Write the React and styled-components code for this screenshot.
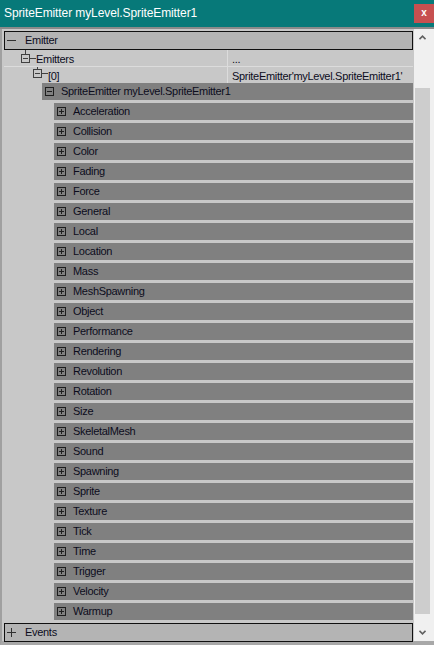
import React from 'react'
import styled, { createGlobalStyle } from 'styled-components'

const GlobalStyle = createGlobalStyle`
  html, body {
    margin: 0;
    padding: 0;
    background: #c8c8c8;
  }
  body {
    font-family: "Liberation Sans", Arial, sans-serif;
  }
`

const groups = [
  'Acceleration', 'Collision', 'Color', 'Fading', 'Force', 'General', 'Local',
  'Location', 'Mass', 'MeshSpawning', 'Object', 'Performance', 'Rendering',
  'Revolution', 'Rotation', 'Size', 'SkeletalMesh', 'Sound', 'Spawning',
  'Sprite', 'Texture', 'Tick', 'Time', 'Trigger', 'Velocity', 'Warmup',
]

// little [+] / [-] box used by the tree
function Expander({ open, color = '#3a3a3a' }) {
  return (
    <svg width="9" height="9" viewBox="0 0 9 9" style={{ display: 'block', flexShrink: 0 }}>
      <rect x="0.5" y="0.5" width="8" height="8" fill="none" stroke={color} />
      <line x1="2" y1="4.5" x2="7" y2="4.5" stroke={color} />
      {!open && <line x1="4.5" y1="2" x2="4.5" y2="7" stroke={color} />}
    </svg>
  )
}

// bare +/- drawn in front of a category header
function CategorySign({ open }) {
  const c = '#303030'
  return (
    <svg width="9" height="9" viewBox="0 0 9 9" style={{ display: 'block', flexShrink: 0 }}>
      <line x1="0" y1="4.5" x2="9" y2="4.5" stroke={c} />
      {!open && <line x1="4.5" y1="0" x2="4.5" y2="9" stroke={c} />}
    </svg>
  )
}

// tree connector: stem from the parent, box, then a branch to the label
function TreeGlyph({ boxTop, stem }) {
  const c = '#404040'
  return (
    <svg width="17" height="16" viewBox="0 0 17 16" style={{ display: 'block', flexShrink: 0 }}>
      {stem && <line x1="5.5" y1="0" x2="5.5" y2={boxTop} stroke={c} />}
      <rect x="1.5" y={boxTop + 0.5} width="8" height="8" fill="none" stroke={c} />
      <line x1="3" y1={boxTop + 4.5} x2="8" y2={boxTop + 4.5} stroke={c} />
      <line x1="9.5" y1={boxTop + 4.5} x2="16" y2={boxTop + 4.5} stroke={c} />
    </svg>
  )
}

function Chevron({ down }) {
  return (
    <svg width="7" height="5" viewBox="0 0 7 5" style={{ display: 'block' }}>
      <polyline
        points={down ? '0.5,0.8 3.5,3.8 6.5,0.8' : '0.5,4.2 3.5,1.2 6.5,4.2'}
        fill="none"
        stroke="#606060"
        strokeWidth="1.6"
      />
    </svg>
  )
}

export default function App() {
  return (
    <>
      <GlobalStyle />
      <Window>
        <TitleBar>
          <Title>SpriteEmitter myLevel.SpriteEmitter1</Title>
          <CloseButton>x</CloseButton>
        </TitleBar>
        <Body>
          <Tree>
            <Category>
              <CategorySign open />
              <Label>Emitter</Label>
            </Category>

            <PropRow>
              <NameCell indent={16}>
                <TreeGlyph boxTop={4} stem />
                <Label>Emitters</Label>
              </NameCell>
              <ValueCell>...</ValueCell>
            </PropRow>
            <PropRow last>
              <NameCell indent={28}>
                <TreeGlyph boxTop={2} stem />
                <Label>[0]</Label>
              </NameCell>
              <ValueCell>SpriteEmitter'myLevel.SpriteEmitter1'</ValueCell>
            </PropRow>

            <ObjectRow>
              <Expander open color="#1e1e1e" />
              <Label>SpriteEmitter myLevel.SpriteEmitter1</Label>
            </ObjectRow>

            <GroupList>
              {groups.map(name => (
                <GroupRow key={name}>
                  <Expander color="#1e1e1e" />
                  <Label>{name}</Label>
                </GroupRow>
              ))}
            </GroupList>

            <Category events>
              <CategorySign />
              <Label>Events</Label>
            </Category>
          </Tree>

          <ScrollBar>
            <ScrollArrow><Chevron /></ScrollArrow>
            <ScrollTrack>
              <Thumb />
            </ScrollTrack>
            <ScrollArrow><Chevron down /></ScrollArrow>
          </ScrollBar>
        </Body>
      </Window>
    </>
  )
}

const Window = styled.div`
  width: 434px;
  height: 645px;
  box-sizing: border-box;
  display: flex;
  flex-direction: column;
  background: #c8c8c8;
  overflow: hidden;
`

const TitleBar = styled.div`
  height: 27px;
  flex-shrink: 0;
  display: flex;
  align-items: flex-start;
  background: #077979;
  border-bottom: 2px solid #8a8a8a;
`

const Title = styled.div`
  flex: 1;
  padding: 6px 0 0 4px;
  color: #ffffff;
  font-size: 12px;
  letter-spacing: -0.1px;
  line-height: 14px;
  white-space: nowrap;
`

const CloseButton = styled.div`
  width: 20px;
  height: 19px;
  margin-top: 4px;
  background: #c75050;
  color: #ffffff;
  font-size: 10px;
  font-weight: bold;
  line-height: 18px;
  text-align: center;
`

const Body = styled.div`
  flex: 1;
  display: flex;
  border-left: 2px solid #a0a0a0;
  border-bottom: 4px solid #a8a8a8;
  min-height: 0;
`

const Tree = styled.div`
  flex: 1;
  padding: 2px 1px 0 2px;
  display: flex;
  flex-direction: column;
  font-size: 11px;
  letter-spacing: -0.3px;
  color: #0c0c1c;
  min-width: 0;
`

const Label = styled.span`
  white-space: nowrap;
  line-height: 13px;
`

const Category = styled.div`
  height: 19px;
  margin-top: ${p => (p.events ? '3px' : '0')};
  box-sizing: border-box;
  display: flex;
  align-items: center;
  gap: 9px;
  border: 1px solid #101010;
  background: #b4b4b4;
  padding-left: 2px;
  flex-shrink: 0;
`

const PropRow = styled.div`
  display: flex;
  height: ${p => (p.last ? '16px' : '17px')};
  box-sizing: border-box;
  border-bottom: ${p => (p.last ? 'none' : '1px solid #dcdcdc')};
  flex-shrink: 0;
`

const NameCell = styled.div`
  width: 224px;
  box-sizing: border-box;
  padding-left: ${p => p.indent}px;
  display: flex;
  align-items: flex-start;
  border-right: 1px solid #dcdcdc;

  ${Label} {
    margin: 3px 0 0 -1px;
  }
`

const ValueCell = styled.div`
  flex: 1;
  padding: 3px 0 0 4px;
  line-height: 13px;
  white-space: nowrap;
  overflow: hidden;
`

const ObjectRow = styled.div`
  height: 17px;
  margin-left: 38px;
  display: flex;
  align-items: center;
  gap: 7px;
  padding-left: 3px;
  background: #808080;
  flex-shrink: 0;
`

const GroupList = styled.div`
  display: flex;
  flex-direction: column;
  gap: 3px;
  margin: 3px 0 0 50px;
`

const GroupRow = styled.div`
  height: 17px;
  display: flex;
  align-items: center;
  gap: 7px;
  padding-left: 3px;
  background: #808080;
`

const ScrollBar = styled.div`
  width: 17px;
  flex-shrink: 0;
  display: flex;
  flex-direction: column;
  background: #f0f0f0;
  border-right: 3px solid #f0f0f0;
  box-shadow: 2px 0 0 #5a5a5a;
`

const ScrollArrow = styled.div`
  height: 17px;
  display: flex;
  align-items: center;
  justify-content: center;
  flex-shrink: 0;
`

const ScrollTrack = styled.div`
  flex: 1;
  padding: 42px 1px 10px 1px;
  display: flex;
`

const Thumb = styled.div`
  flex: 1;
  background: #cdcdcd;
`
